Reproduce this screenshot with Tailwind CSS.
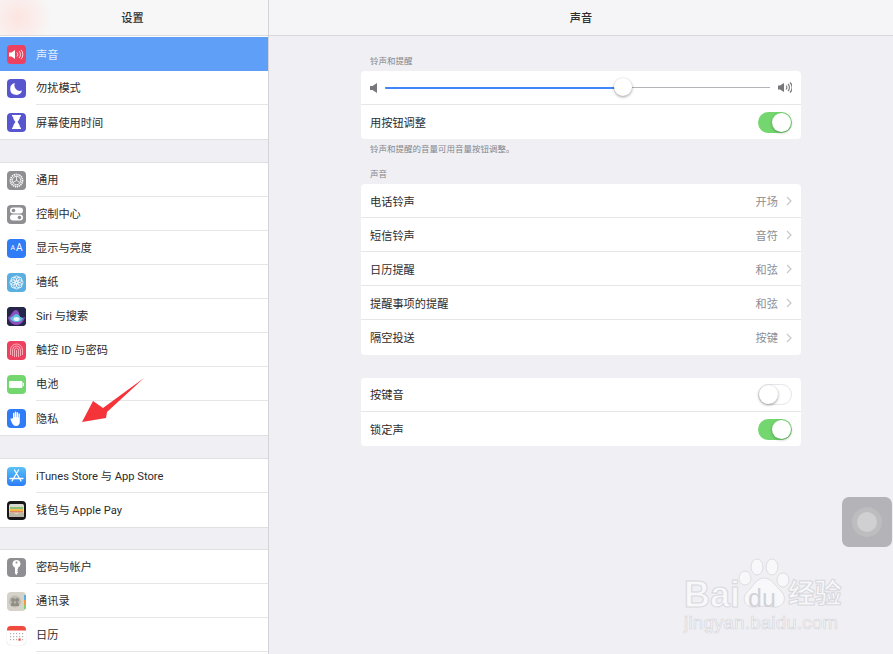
<!DOCTYPE html>
<html lang="zh">
<head>
  <meta charset="UTF-8">
  <title>设置</title>
  <script src="https://cdn.jsdelivr.net/npm/@tailwindcss/browser@4"></script>
</head>
<body class="bg-[#efeff4] font-['Roboto','Noto_Sans_CJK_SC',sans-serif] text-[11.2px] text-[#2c2c2e]">
<div class="relative flex h-[654px] w-[893px] overflow-hidden">

  <!-- 左侧设置列表 -->
  <aside class="flex h-full w-[269px] shrink-0 flex-col overflow-hidden border-r border-[#d4d4d8] bg-[#efeff4]">
    <header class="flex h-[36px] shrink-0 items-center justify-center border-b border-[#dcdcdf] bg-[#f7f7f7] bg-[radial-gradient(circle_at_18px_18px,#fde4e0_0,#f7f7f7_34px)] pr-[3px] pt-[4px] font-medium">设置</header>

    <div class="shrink-0 border-b border-[#e0e0e3] bg-white pt-[1px]">
      <div class="flex h-[34px] items-center gap-[10px] bg-[#5f9ff8] pl-[7px] text-[#e4efff]">
        <span class="flex h-[19px] w-[19px] items-center justify-center rounded-[4px] bg-[#ee4160]">
          <svg width="15" height="11" viewBox="0 0 15 11" fill="none"><path d="M0 3.500h2.500L6 1v9L2.500 7.500H0z" fill="#fff"/><path d="M8 3.500a3 3 0 0 1 0 4M10 2a5 5 0 0 1 0 7M12 .8a7 7 0 0 1 0 9.400" stroke="#fff" stroke-width=".8"/></svg>
        </span>
        <span class="pt-[4px]">声音</span>
      </div>
      <div class="flex h-[34px] items-center gap-[10px] pl-[7px]">
        <span class="flex h-[19px] w-[19px] items-center justify-center rounded-[4px] bg-[#5856ce]">
          <svg width="13" height="13" viewBox="0 0 13 13"><path d="M5 1a6 6 0 1 0 7 7.500A5.500 5.500 0 0 1 5 1z" fill="#fff"/></svg>
        </span>
        <span class="flex h-full flex-1 items-center border-b border-[#e6e6e8] pt-[4px]">勿扰模式</span>
      </div>
      <div class="flex h-[34px] items-center gap-[10px] pl-[7px]">
        <span class="flex h-[19px] w-[19px] items-center justify-center rounded-[4px] bg-[#5856ce]">
          <svg width="11" height="14" viewBox="0 0 11 14"><path d="M1 0h9v1.500H9C9 4.500 7 6 6.500 7 7 8 9 9.500 9 12.500h1V14H1v-1.500h1C2 9.500 4 8 4.500 7 4 6 2 4.500 2 1.500H1z" fill="#fff"/></svg>
        </span>
        <span class="pt-[4px]">屏幕使用时间</span>
      </div>
    </div>

    <div class="mt-[22px] shrink-0 border-y border-[#e0e0e3] bg-white">
      <div class="flex h-[34px] items-center gap-[10px] pl-[7px]">
        <span class="flex h-[19px] w-[19px] items-center justify-center rounded-[4px] bg-[#8e8e93]">
          <svg width="15" height="15" viewBox="0 0 15 15" fill="none" stroke="#fff"><circle cx="7.500" cy="7.500" r="6" stroke-width="1.800" stroke-dasharray="1.200 .7"/><circle cx="7.500" cy="7.500" r="4.200" stroke-width=".8"/><path d="M7.500 7.500V3.500M7.500 7.500l3.500 2M7.500 7.500L4 9.500" stroke-width=".8"/></svg>
        </span>
        <span class="flex h-full flex-1 items-center border-b border-[#e6e6e8] pt-[3px]">通用</span>
      </div>
      <div class="flex h-[34px] items-center gap-[10px] pl-[7px]">
        <span class="flex h-[19px] w-[19px] items-center justify-center rounded-[4px] bg-[#8e8e93]">
          <svg width="13" height="14" viewBox="0 0 13 14"><rect x="0" y="0.500" width="13" height="6" rx="3" fill="#fff"/><circle cx="3.500" cy="3.500" r="1.800" fill="#8e8e93"/><rect x="0" y="7.500" width="13" height="6" rx="3" fill="#fff"/><circle cx="9.500" cy="10.500" r="1.800" fill="#8e8e93"/></svg>
        </span>
        <span class="flex h-full flex-1 items-center border-b border-[#e6e6e8] pt-[3px]">控制中心</span>
      </div>
      <div class="flex h-[34px] items-center gap-[10px] pl-[7px]">
        <span class="flex h-[19px] w-[19px] items-center justify-center rounded-[4px] bg-[#2f7cf6] leading-none text-white"><span class="text-[7px]">A</span><span class="ml-[1px] text-[10px]">A</span></span>
        <span class="flex h-full flex-1 items-center border-b border-[#e6e6e8] pt-[3px]">显示与亮度</span>
      </div>
      <div class="flex h-[34px] items-center gap-[10px] pl-[7px]">
        <span class="flex h-[19px] w-[19px] items-center justify-center rounded-[4px] bg-[#5aaee0]">
          <svg width="15" height="15" viewBox="0 0 15 15" fill="none" stroke="#fff" stroke-width=".8"><circle cx="7.500" cy="3.700" r="2.700"/><circle cx="7.500" cy="11.300" r="2.700"/><circle cx="3.700" cy="7.500" r="2.700"/><circle cx="11.300" cy="7.500" r="2.700"/><circle cx="4.800" cy="4.800" r="2.700"/><circle cx="10.200" cy="4.800" r="2.700"/><circle cx="4.800" cy="10.200" r="2.700"/><circle cx="10.200" cy="10.200" r="2.700"/></svg>
        </span>
        <span class="flex h-full flex-1 items-center border-b border-[#e6e6e8] pt-[3px]">墙纸</span>
      </div>
      <div class="flex h-[34px] items-center gap-[10px] pl-[7px]">
        <span class="flex h-[19px] w-[19px] items-center justify-center overflow-hidden rounded-[4px] bg-[#15152a]">
          <svg width="19" height="19" viewBox="0 0 19 19"><rect width="19" height="19" fill="#26264a"/><path d="M1 10c4-1 4-7 8-7 3 0 3 4 4 7 1 1 3 1 5 0-1 4-4 8-8.500 8S1.500 14 1 10z" fill="#8d4fc2"/><path d="M3 11c3-1 4-4 6.500-4S13 11 16 11c-1 3-3.500 4-6.500 4S4 14 3 11z" fill="#58c3dd"/><ellipse cx="9.500" cy="12" rx="3" ry="2" fill="#e4f5fb"/></svg>
        </span>
        <span class="flex h-full flex-1 items-center border-b border-[#e6e6e8] pt-[3px]">Siri 与搜索</span>
      </div>
      <div class="flex h-[34px] items-center gap-[10px] pl-[7px]">
        <span class="flex h-[19px] w-[19px] items-center justify-center rounded-[4px] bg-[#ee4160]">
          <svg width="15" height="15" viewBox="0 0 15 15" fill="none" stroke="#ffc4cf" stroke-width=".8"><path d="M1.500 12V7a6 6 0 0 1 12 0v5"/><path d="M3.500 13V7a4 4 0 0 1 8 0v6"/><path d="M5.500 14V7a2 2 0 0 1 4 0v7"/><path d="M7.500 7v7"/></svg>
        </span>
        <span class="flex h-full flex-1 items-center border-b border-[#e6e6e8] pt-[4px]">触控 ID 与密码</span>
      </div>
      <div class="flex h-[34px] items-center gap-[10px] pl-[7px]">
        <span class="flex h-[19px] w-[19px] items-center justify-center rounded-[4px] bg-[#74d66f]">
          <svg width="15" height="7" viewBox="0 0 15 7"><rect width="13.500" height="7" rx="1.200" fill="#fff"/><rect x="14" y="2" width="1" height="3" fill="#fff"/></svg>
        </span>
        <span class="flex h-full flex-1 items-center border-b border-[#e6e6e8] pt-[4px]">电池</span>
      </div>
      <div class="flex h-[34px] items-center gap-[10px] pl-[7px]">
        <span class="flex h-[19px] w-[19px] items-center justify-center rounded-[4px] bg-[#2f7cf6]">
          <svg width="13" height="15" viewBox="0 0 13 15"><path d="M3 7V2.500a.7.7 0 0 1 1.400 0V6h.4V1.200a.7.7 0 0 1 1.400 0V6h.4V1.700a.7.7 0 0 1 1.400 0V6.500h.4V3a.7.7 0 0 1 1.400 0v7.500C10 13 8.500 15 6 15c-2 0-3-1-4-3L.5 8.500c-.3-.8.7-1.300 1.200-.7z" fill="#fff"/></svg>
        </span>
        <span class="pt-[4px]">隐私</span>
      </div>
    </div>

    <div class="mt-[22px] shrink-0 border-y border-[#e0e0e3] bg-white">
      <div class="flex h-[34px] items-center gap-[10px] pl-[7px]">
        <span class="flex h-[19px] w-[19px] items-center justify-center rounded-[4px] bg-gradient-to-b from-[#5ac2f8] to-[#2d7df6]">
          <svg width="15" height="14" viewBox="0 0 15 14" fill="none" stroke="#fff" stroke-width="1.300" stroke-linecap="round"><path d="M9.500 1L3 12M5.500 1L12 12M1 9.500h13"/></svg>
        </span>
        <span class="flex h-full flex-1 items-center border-b border-[#e6e6e8] pt-[4px]">iTunes Store 与 App Store</span>
      </div>
      <div class="flex h-[34px] items-center gap-[10px] pl-[7px]">
        <span class="flex h-[19px] w-[19px] items-center justify-center rounded-[4px] bg-[#17171a]">
          <svg width="15" height="13" viewBox="0 0 15 13"><rect width="15" height="13" rx="1.500" fill="#d9d8cc"/><rect x="1" y="3" width="13" height="2" fill="#8cbc7a"/><rect x="1" y="5" width="13" height="2" fill="#e9c04e"/><rect x="1" y="7" width="13" height="1.500" fill="#e2815a"/><path d="M0 9h5c.5 1.500 4.500 1.500 5 0h5v4H0z" fill="#b9b6a6"/></svg>
        </span>
        <span class="pt-[3px]">钱包与 Apple Pay</span>
      </div>
    </div>

    <div class="mt-[21px] flex-1 border-t border-[#e0e0e3] bg-white">
      <div class="flex h-[34px] items-center gap-[10px] pl-[7px]">
        <span class="flex h-[19px] w-[19px] items-center justify-center rounded-[4px] bg-[#8e8e93]">
          <svg width="9" height="15" viewBox="0 0 9 15"><path d="M4.500 0a4 4 0 0 1 1.500 7.700V9l-.8.800.8.800-.8.800.8.800L4.500 15 3 13.500V7.700A4 4 0 0 1 4.500 0z" fill="#fff"/><circle cx="4.500" cy="2.500" r="1" fill="#8e8e93"/></svg>
        </span>
        <span class="flex h-full flex-1 items-center border-b border-[#e6e6e8] pt-[3px]">密码与帐户</span>
      </div>
      <div class="flex h-[34px] items-center gap-[10px] pl-[7px]">
        <span class="relative flex h-[19px] w-[19px] items-center justify-center overflow-hidden rounded-[4px] bg-[#d5d3c9]">
          <svg width="19" height="19" viewBox="0 0 19 19"><circle cx="8" cy="9.500" r="6" fill="#bdbbb0"/><circle cx="6" cy="8" r="2" fill="#8f8d84"/><circle cx="10" cy="8" r="2" fill="#8f8d84"/><path d="M4 14c0-3 1-4 2-4s2 1 2 4zM8 14c0-3 1-4 2-4s2 1 2 4z" fill="#8f8d84"/><rect x="17" y="3" width="2" height="5" fill="#5aaee0"/><rect x="17" y="8" width="2" height="5" fill="#f09a3e"/><rect x="17" y="13" width="2" height="4" fill="#74d66f"/></svg>
        </span>
        <span class="flex h-full flex-1 items-center border-b border-[#e6e6e8] pt-[4px]">通讯录</span>
      </div>
      <div class="flex h-[34px] items-center gap-[10px] pl-[7px]">
        <span class="flex h-[19px] w-[19px] items-center justify-center overflow-hidden rounded-[4px] bg-white shadow-[0_0_1px_rgba(0,0,0,0.3)]">
          <svg width="19" height="19" viewBox="0 0 19 19"><rect width="19" height="4.500" fill="#f0493e"/><g fill="#b0b0b0"><rect x="3" y="7" width="1.200" height="1.200"/><rect x="6" y="7" width="1.200" height="1.200"/><rect x="9" y="7" width="1.200" height="1.200"/><rect x="12" y="7" width="1.200" height="1.200"/><rect x="15" y="7" width="1.200" height="1.200"/><rect x="3" y="10" width="1.200" height="1.200"/><rect x="6" y="10" width="1.200" height="1.200"/><rect x="9" y="10" width="1.200" height="1.200"/><rect x="12" y="10" width="1.200" height="1.200"/><rect x="15" y="10" width="1.200" height="1.200"/><rect x="3" y="13" width="1.200" height="1.200"/><rect x="6" y="13" width="1.200" height="1.200"/><rect x="9" y="13" width="1.200" height="1.200"/><rect x="15" y="13" width="1.200" height="1.200"/></g><rect x="11.500" y="12.500" width="2.200" height="2.200" fill="#f0493e"/></svg>
        </span>
        <span class="flex h-full flex-1 items-center border-b border-[#e6e6e8] pt-[3px]">日历</span>
      </div>
    </div>
  </aside>

  <!-- 右侧声音设置 -->
  <main class="flex h-full flex-1 flex-col">
    <header class="flex h-[36px] shrink-0 items-center justify-center border-b border-[#d8d8dc] bg-[#f5f5f8] pt-[4px] font-medium">声音</header>

    <div class="w-[440px] self-center pt-[19px]">
      <p class="mb-[4px] h-[12px] pl-[9px] text-[8.5px] leading-[12px] text-[#85858a]">铃声和提醒</p>
      <section class="rounded-[4px] bg-white">
        <div class="flex h-[34px] items-center border-b border-[#e6e6e8] px-[9px]">
          <svg width="7" height="10" viewBox="0 0 7 10" class="shrink-0"><path d="M0 3h2.500L7 0v10L2.500 7H0z" fill="#77777c"/></svg>
          <div class="relative ml-[8px] h-[1px] w-[385px] bg-[#b4b4b8]">
            <div class="h-[2px] w-[238px] rounded-full bg-[#3f86f6]"></div>
            <span class="absolute left-[229px] top-[-9px] h-[18px] w-[18px] rounded-full bg-white shadow-[0_1px_3px_rgba(0,0,0,0.4)]"></span>
          </div>
          <svg width="14" height="13" viewBox="0 0 14 13" fill="none" class="ml-auto shrink-0"><path d="M0 4.500h2L6 2v9L2 8.500H0z" fill="#77777c"/><path d="M8 4.500a3 3 0 0 1 0 4M10 3a5 5 0 0 1 0 7M12 1.500a7 7 0 0 1 0 10" stroke="#77777c" stroke-width="1.100"/></svg>
        </div>
        <div class="flex h-[34px] items-center justify-between px-[9px]">
          <span class="pt-[5px]">用按钮调整</span>
          <span class="flex h-[21px] w-[34px] items-center justify-end rounded-full bg-[#74d66f] pr-[1px]"><span class="h-[19px] w-[19px] rounded-full bg-white shadow-[0_1px_3px_rgba(0,0,0,0.3)]"></span></span>
        </div>
      </section>
      <p class="mt-[4px] h-[12px] pl-[9px] text-[8.5px] leading-[12px] text-[#85858a]">铃声和提醒的音量可用音量按钮调整。</p>

      <p class="mt-[13px] mb-[4px] h-[12px] pl-[9px] text-[8.5px] leading-[12px] text-[#85858a]">声音</p>
      <section class="rounded-[4px] bg-white">
        <div class="flex h-[34px] items-center border-b border-[#e6e6e8] px-[9px]">
          <span class="pt-[5px]">电话铃声</span>
          <span class="ml-auto pt-[5px] text-[#8e8e93]">开场</span>
          <svg width="6" height="10" viewBox="0 0 6 10" fill="none" class="ml-[8px]"><path d="M1 1l4 4-4 4" stroke="#c7c7cc" stroke-width="1.200"/></svg>
        </div>
        <div class="flex h-[34px] items-center border-b border-[#e6e6e8] px-[9px]">
          <span class="pt-[5px]">短信铃声</span>
          <span class="ml-auto pt-[5px] text-[#8e8e93]">音符</span>
          <svg width="6" height="10" viewBox="0 0 6 10" fill="none" class="ml-[8px]"><path d="M1 1l4 4-4 4" stroke="#c7c7cc" stroke-width="1.200"/></svg>
        </div>
        <div class="flex h-[34px] items-center border-b border-[#e6e6e8] px-[9px]">
          <span class="pt-[5px]">日历提醒</span>
          <span class="ml-auto pt-[5px] text-[#8e8e93]">和弦</span>
          <svg width="6" height="10" viewBox="0 0 6 10" fill="none" class="ml-[8px]"><path d="M1 1l4 4-4 4" stroke="#c7c7cc" stroke-width="1.200"/></svg>
        </div>
        <div class="flex h-[34px] items-center border-b border-[#e6e6e8] px-[9px]">
          <span class="pt-[5px]">提醒事项的提醒</span>
          <span class="ml-auto pt-[5px] text-[#8e8e93]">和弦</span>
          <svg width="6" height="10" viewBox="0 0 6 10" fill="none" class="ml-[8px]"><path d="M1 1l4 4-4 4" stroke="#c7c7cc" stroke-width="1.200"/></svg>
        </div>
        <div class="flex h-[35px] items-center px-[9px]">
          <span class="pt-[4px]">隔空投送</span>
          <span class="ml-auto pt-[4px] text-[#8e8e93]">按键</span>
          <svg width="6" height="10" viewBox="0 0 6 10" fill="none" class="ml-[8px]"><path d="M1 1l4 4-4 4" stroke="#c7c7cc" stroke-width="1.200"/></svg>
        </div>
      </section>

      <section class="mt-[23px] rounded-[4px] bg-white">
        <div class="flex h-[34px] items-center justify-between border-b border-[#e6e6e8] px-[9px]">
          <span class="pt-[4px]">按键音</span>
          <span class="flex h-[21px] w-[34px] items-center rounded-full border border-[#e5e5ea] bg-white"><span class="h-[19px] w-[19px] rounded-full bg-white shadow-[0_1px_3px_rgba(0,0,0,0.4)]"></span></span>
        </div>
        <div class="flex h-[34px] items-center justify-between px-[9px]">
          <span class="pt-[4px]">锁定声</span>
          <span class="flex h-[21px] w-[34px] items-center justify-end rounded-full bg-[#74d66f] pr-[1px]"><span class="h-[19px] w-[19px] rounded-full bg-white shadow-[0_1px_3px_rgba(0,0,0,0.3)]"></span></span>
        </div>
      </section>
    </div>
  </main>

  <!-- 红色箭头 -->
  <svg class="absolute left-[80px] top-[376px]" width="66" height="48" viewBox="0 0 66 48"><polygon points="2,46 13,25 23,32 64,2 27,36 26,42" fill="#f5343a"/></svg>

  <!-- 悬浮按钮 -->
  <div class="absolute left-[842px] top-[497px] flex h-[50px] w-[50px] items-center justify-center rounded-[7px] bg-[#b4b4b8]">
    <span class="flex h-[30px] w-[30px] items-center justify-center rounded-full bg-[#bdbdc0]"><span class="h-[20px] w-[20px] rounded-full bg-[#d0d0d2]"></span></span>
  </div>

  <!-- 水印 -->
  <div class="pointer-events-none absolute left-[684px] top-[558px] h-[80px] w-[165px] text-[#f8f8fb]">
    <svg class="absolute left-[51px] top-0" width="66" height="54" viewBox="0 0 66 54" fill="#f8f8fb" stroke="#dedee2"><ellipse cx="22" cy="9" rx="6" ry="8"/><ellipse cx="37" cy="9" rx="6" ry="8"/><ellipse cx="10" cy="20" rx="6" ry="7"/><ellipse cx="48" cy="22" rx="6" ry="7"/><path d="M29 20c8 0 11 8 18 14 6 8 0 16-9 15-6-1-12-1-18 0-10 1-14-8-8-15 6-5 9-14 17-14z"/></svg>
    <span class="absolute left-0 top-[14px] font-['Liberation_Sans',sans-serif] text-[36px] leading-[46px] font-bold [-webkit-text-stroke:1px_#d8d8dc]">Bai</span>
    <span class="absolute left-[64px] top-[26px] font-['Liberation_Sans',sans-serif] text-[25px] leading-[28px] text-[#d2d2d6]">du</span>
    <span class="absolute left-[104px] top-[19px] text-[27px] leading-[34px] font-bold tracking-[-0.5px] [-webkit-text-stroke:1px_#d8d8dc]">经验</span>
    <span class="absolute left-0 top-[55px] font-['Liberation_Sans',sans-serif] text-[18.5px] leading-[20px] tracking-[0.3px] [-webkit-text-stroke:0.7px_#d8d8dc]">jingyan.baidu.com</span>
  </div>
</div>
</body>
</html>
